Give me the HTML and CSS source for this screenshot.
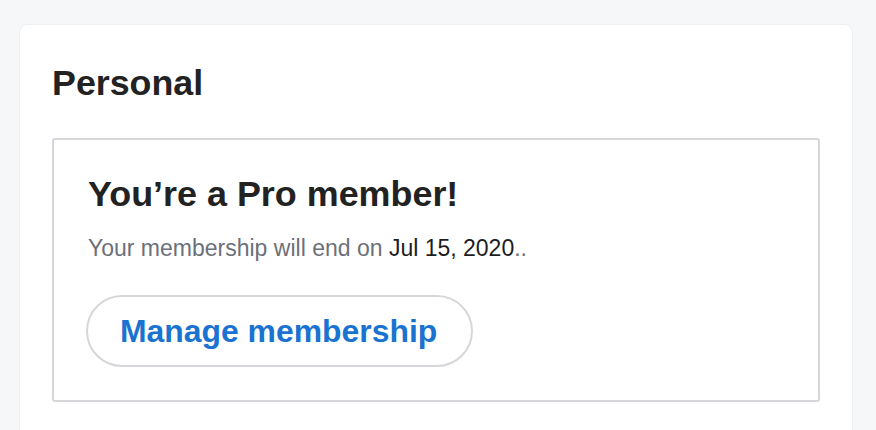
FILE: index.html
```html
<!DOCTYPE html>
<html>
<head>
<meta charset="utf-8">
<link rel="stylesheet" href="styles.css">
</head>
<body>
<div class="page">
  <section class="card">
    <h2 class="card-title">Personal</h2>
    <div class="member-box">
      <h3 class="member-title">You’re a Pro member!</h3>
      <p class="member-text">Your membership will end on <span class="date">Jul 15, 2020</span>..</p>
      <button class="manage-btn">Manage membership</button>
    </div>
  </section>
</div>
</body>
</html>
```
FILE: styles.css
```css
html, body {
  margin: 0;
  padding: 0;
  background: #f6f7f9;
  font-family: "Liberation Sans", Arial, Helvetica, sans-serif;
}
.page {
  padding: 25px 24px 0 20px;
  height: 430px;
  box-sizing: border-box;
  overflow: hidden;
}
.card {
  background: #ffffff;
  border-radius: 8px;
  box-shadow: 0 0 0 1px #eeeff2;
  padding: 38px 32px 40px 32px;
  height: 500px;
}
.card-title {
  margin: 0;
  font-size: 35.8px;
  line-height: 40px;
  font-weight: 700;
  color: #222222;
}
.member-box {
  margin-top: 35px;
  border: 2px solid #d7d7db;
  border-radius: 3px;
  padding: 34px 34px 33px 34px;
}
.member-title {
  margin: 0;
  font-size: 35.9px;
  line-height: 40px;
  font-weight: 700;
  color: #222222;
}
.member-text {
  margin: 20px 0 0 0;
  font-size: 23px;
  line-height: 28px;
  color: #6c7079;
}
.date {
  color: #1d1d1f;
}
.manage-btn {
  display: inline-block;
  margin: 33px 0 0 -2px;
  height: 72px;
  padding: 0 34px 0 32px;
  border: 2px solid #d7d7db;
  border-radius: 36px;
  background: #ffffff;
  font-family: "Liberation Sans", Arial, Helvetica, sans-serif;
  font-size: 31.9px;
  font-weight: 700;
  color: #1a73d0;
  cursor: pointer;
}
```
